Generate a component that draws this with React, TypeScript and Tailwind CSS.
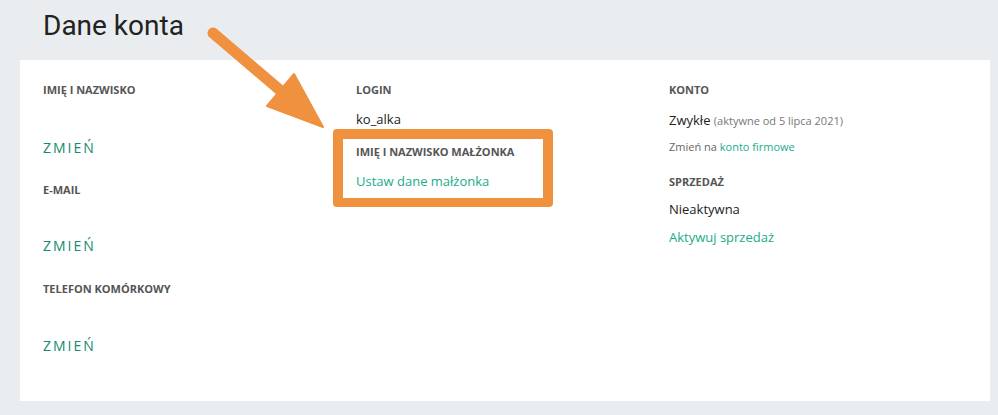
import React from 'react'

const label = "text-[11px] leading-4 font-bold uppercase text-[#555]"
const change = "text-[14px] leading-5 tracking-[2px] text-[#148a6f] text-left"

function Arrow() {
    return (
        <svg className="absolute left-0 top-0 pointer-events-none" width="340" height="140" viewBox="0 0 340 140">
            <line x1="213" y1="33" x2="288" y2="97" stroke="#f0913f" strokeWidth="11" strokeLinecap="round" />
            <polygon points="323,127 267,106 294,74" fill="#f0913f" stroke="#f0913f" strokeWidth="2" strokeLinejoin="round" />
        </svg>
    )
}

export default function App() {
    return (
        <div className="relative min-h-[415px] bg-[#e9edf0] pt-[8px] pb-[14px] font-['Open_Sans',sans-serif]">
            <h1 className="pl-[43px] text-[28px] leading-[36px] text-[#222] font-['Roboto',sans-serif]">Dane konta</h1>

            <div className="ml-[20px] mt-[16px] w-[970px] h-[341px] bg-white pt-[22px] pl-[23px] grid grid-cols-[313px_313px_1fr]">
                {/* Kolumna 1 */}
                <div className="flex flex-col items-start">
                    <div className={label}>Imię i nazwisko</div>
                    <button className={`${change} mt-[40px]`}>ZMIEŃ</button>
                    <div className={`${label} mt-[24px]`}>E-mail</div>
                    <button className={`${change} mt-[38px]`}>ZMIEŃ</button>
                    <div className={`${label} mt-[25px]`}>Telefon komórkowy</div>
                    <button className={`${change} mt-[39px]`}>ZMIEŃ</button>
                </div>

                {/* Kolumna 2 */}
                <div className="flex flex-col items-start">
                    <div className={label}>Login</div>
                    <div className="mt-[11px] text-[13px] leading-5 text-[#222]">ko_alka</div>
                    <div className="-ml-[23px] w-[220px] border-[10px] border-b-[9px] border-[#f0913f] rounded-[4px] pl-[13px] pt-[5px] pb-[7px]">
                        <div className={label}>Imię i nazwisko małżonka</div>
                        <a className="block mt-[11px] text-[13px] leading-5 text-[#1aab8b]">Ustaw dane małżonka</a>
                    </div>
                </div>

                {/* Kolumna 3 */}
                <div className="flex flex-col items-start">
                    <div className={label}>Konto</div>
                    <div className="mt-[12px] text-[13px] leading-5 text-[#222]">
                        Zwykłe <span className="text-[11px] text-[#777]">(aktywne od 5 lipca 2021)</span>
                    </div>
                    <div className="mt-[8px] text-[11px] leading-4 text-[#666]">
                        Zmień na <a className="text-[#1aab8b]">konto firmowe</a>
                    </div>
                    <div className={`${label} mt-[19px]`}>Sprzedaż</div>
                    <div className="mt-[9px] text-[13px] leading-5 text-[#222]">Nieaktywna</div>
                    <a className="mt-[8px] text-[13px] leading-5 text-[#1aab8b]">Aktywuj sprzedaż</a>
                </div>
            </div>

            <Arrow />
        </div>
    )
}
